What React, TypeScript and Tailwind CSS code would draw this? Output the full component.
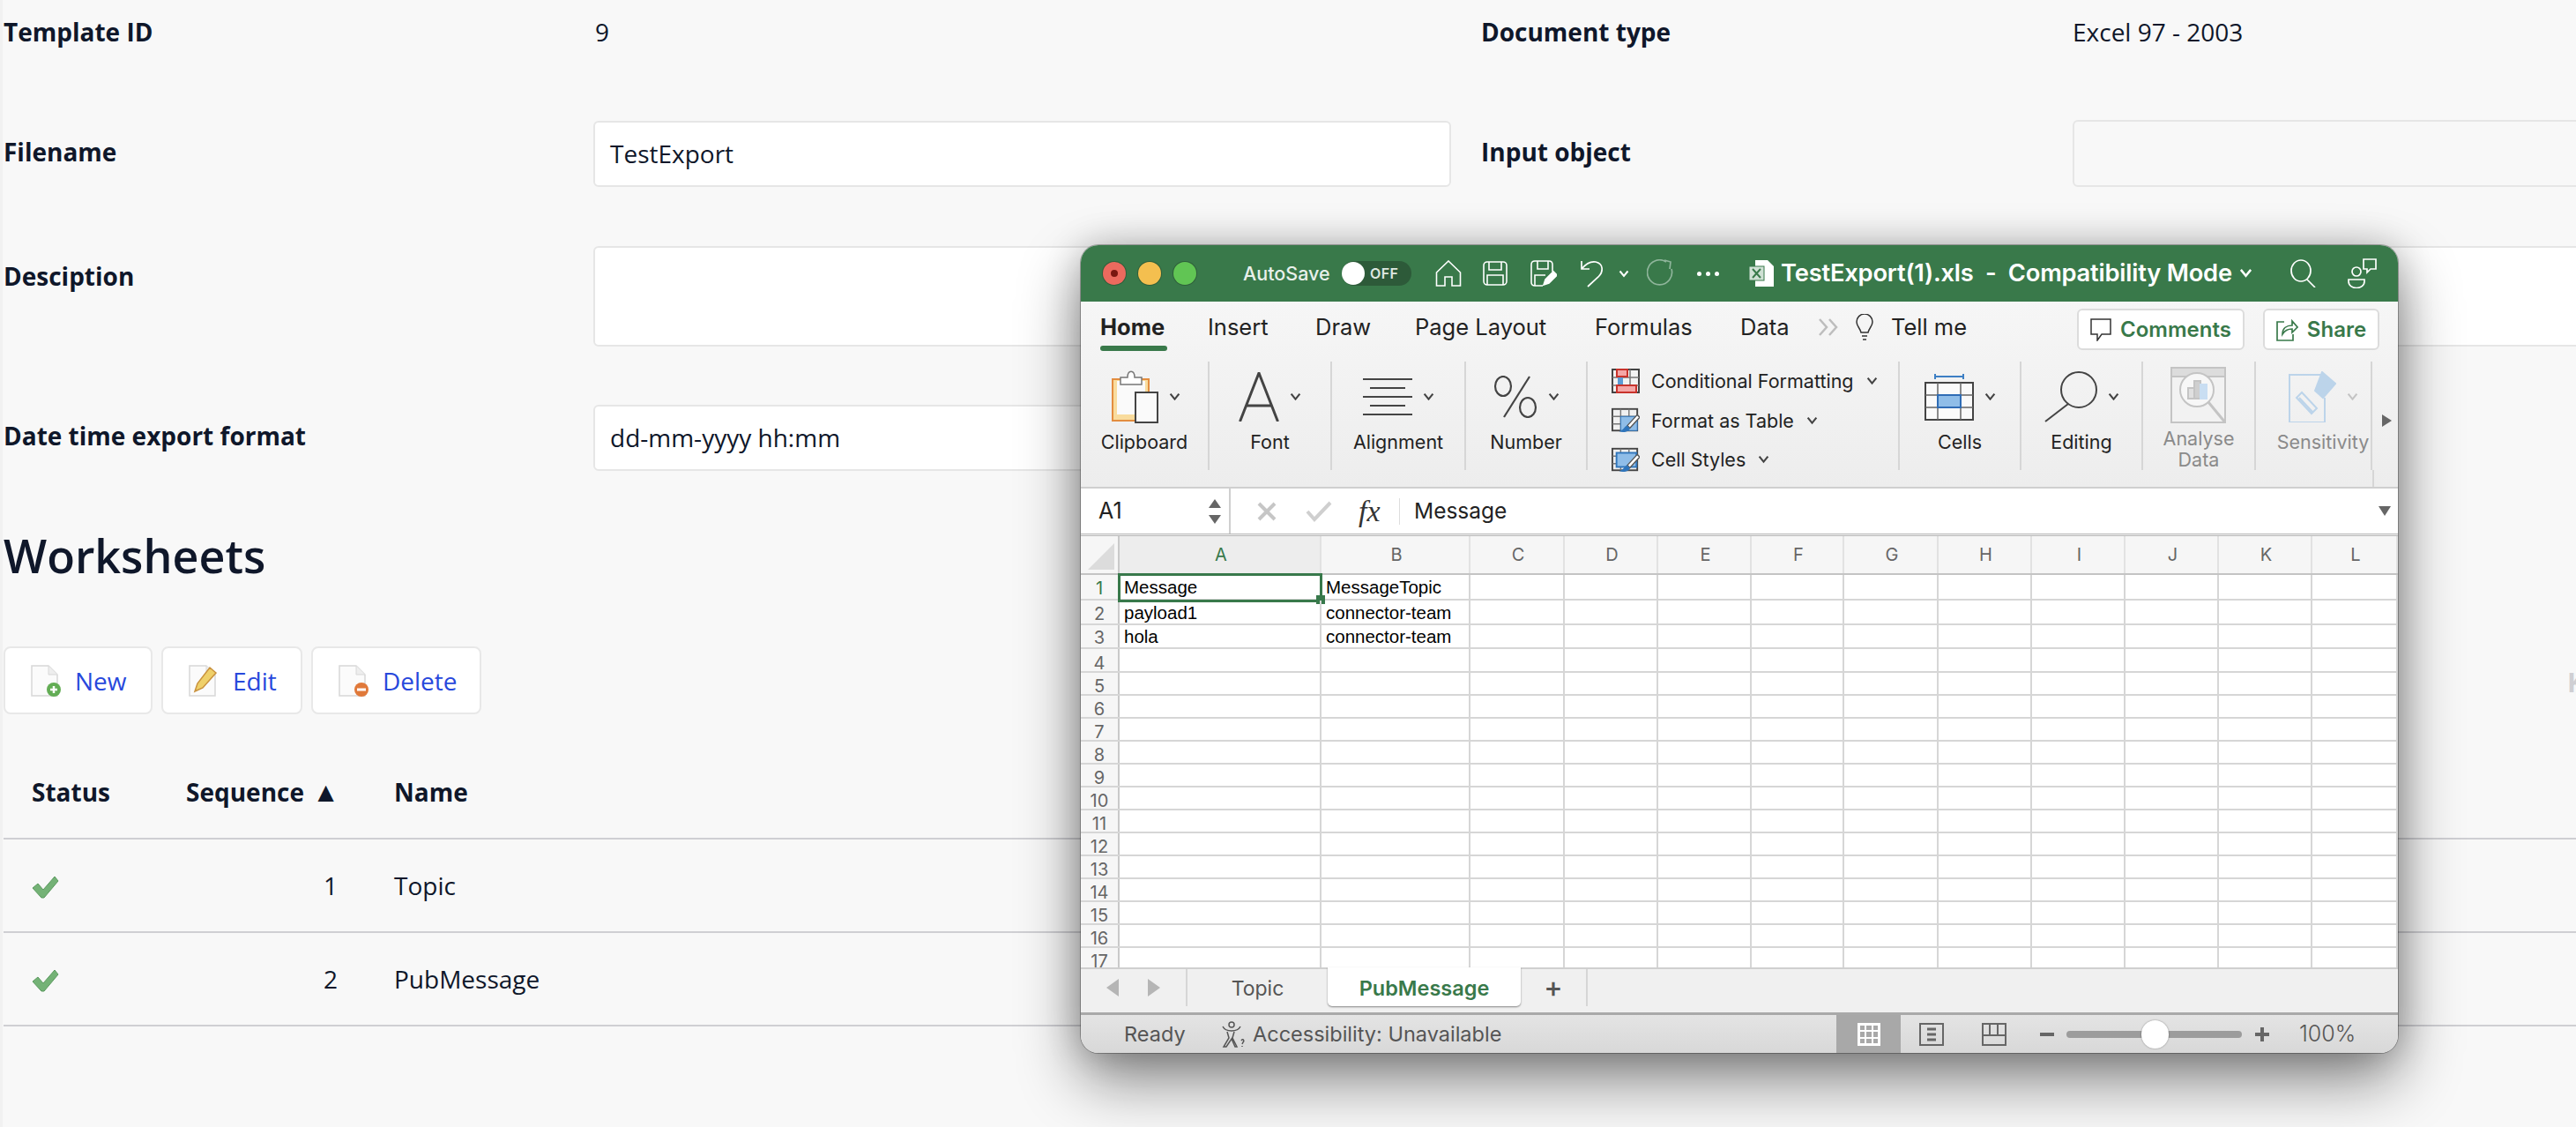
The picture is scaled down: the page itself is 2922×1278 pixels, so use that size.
import type { ReactNode } from 'react'

const PAGE_FONT = 'font-["Open_Sans","Noto_Sans",sans-serif]'

const COLUMNS = [
  { name: 'A', cls: 'w-[229px]' },
  { name: 'B', cls: 'w-[169px]' },
  { name: 'C', cls: 'w-[107px]' },
  { name: 'D', cls: 'w-[106px]' },
  { name: 'E', cls: 'w-[106px]' },
  { name: 'F', cls: 'w-[105px]' },
  { name: 'G', cls: 'w-[107px]' },
  { name: 'H', cls: 'w-[106px]' },
  { name: 'I', cls: 'w-[106px]' },
  { name: 'J', cls: 'w-[106px]' },
  { name: 'K', cls: 'w-[106px]' },
  { name: 'L', cls: 'w-[97px]' },
]

const ROW_HEIGHTS = ['h-[29px]', 'h-[28px]', 'h-[27px]', 'h-[27px]', 'h-[26px]']

const CELLS: Record<string, string> = {
  A1: 'Message',
  B1: 'MessageTopic',
  A2: 'payload1',
  B2: 'connector-team',
  A3: 'hola',
  B3: 'connector-team',
}

function Chev({ className = 'text-[#444]', w = 13 }: { className?: string; w?: number }) {
  return (
    <svg width={w} height={w * 0.75} viewBox="0 0 12 9" fill="none" className={`shrink-0 ${className}`}>
      <path d="M1.5 1.5 6 7l4.5-5.5" stroke="currentColor" strokeWidth="2" />
    </svg>
  )
}

function DocIcon({ children }: { children?: ReactNode }) {
  return (
    <svg width="34" height="36" viewBox="0 0 34 36" className="shrink-0">
      <path d="M1 1h19l10 10v24H1z" fill="#fbfbfb" stroke="#d8d8d8" strokeWidth="1.5" />
      <path d="M20 1v10h10" fill="#eee" stroke="#d8d8d8" strokeWidth="1" />
      {children}
    </svg>
  )
}

function CheckIcon() {
  return (
    <svg width="31" height="26" viewBox="0 0 31 26">
      <path d="M1 14 7 9l6 7L26 1l4 5-16 19h-3z" fill="#74b276" stroke="#5b9a5f" strokeWidth="1" />
    </svg>
  )
}

function Field({ label, children, className }: { label?: string; children?: ReactNode; className: string }) {
  return <div className={className}>{label ?? children}</div>
}

function ToolbarButton({ width, icon, label }: { width: string; icon: ReactNode; label: string }) {
  return (
    <div className={`flex h-[77px] items-center gap-[16px] rounded-[8px] border-2 border-[#e8e8e8] bg-white pl-[29px] ${width}`}>
      {icon}
      <span className="text-[28px] text-[#2748dc]">{label}</span>
    </div>
  )
}

function WorksheetRow({ seq, name }: { seq: number; name: string }) {
  return (
    <div className="grid h-[106px] grid-cols-[175px_236px_1fr] items-center border-b-2 border-[#cfcfd3] text-[28px] text-[#0f172a]">
      <div className="pl-[32px] pt-[4px]">
        <CheckIcon />
      </div>
      <div className="pr-[32px] text-right">{seq}</div>
      <div className="pl-[32px]">{name}</div>
    </div>
  )
}

function RibbonGroup({
  width,
  label,
  icon,
  chevron = true,
  muted = false,
  extra = '',
}: {
  width: string
  label: string
  icon: ReactNode
  chevron?: boolean
  muted?: boolean
  extra?: string
}) {
  return (
    <div className={`flex h-[123px] shrink-0 flex-col items-center border-r-2 border-[#d6d6d6] ${width} ${extra}`}>
      <div className="flex h-[79px] items-center justify-center gap-[12px]">
        {icon}
        {chevron && <Chev className={muted ? 'text-[#c4c4c4]' : 'text-[#444]'} />}
      </div>
      <div className={`text-center text-[21.5px] leading-[24px] ${muted ? 'text-[#8a8a8a]' : 'text-[#222]'}`}>{label}</div>
    </div>
  )
}

function StyleRow({ icon, label }: { icon: ReactNode; label: string }) {
  return (
    <div className="flex h-[44.5px] items-center">
      {icon}
      <span className="ml-[13px] whitespace-nowrap text-[21.5px] text-[#222]">{label}</span>
      <Chev className="ml-[14px] text-[#444]" />
    </div>
  )
}

function GridLines({ stroke = '#444' }: { stroke?: string }) {
  return (
    <g fill="none" stroke={stroke} strokeWidth="2">
      <rect x="1" y="1" width="30" height="26" />
      <path d="M1 10h30M1 19h30M11 1v26M21 1v26" stroke="#777" strokeWidth="1.5" />
    </g>
  )
}

function Brush() {
  return (
    <g>
      <path d="M31 8 19 21l3 3L34 11z" fill="#fff" stroke="#555" strokeWidth="1.5" />
      <path d="M19 21c-4 1-4 6-10 7 6 2 13 0 13-4z" fill="#2f75bb" />
    </g>
  )
}

function Sheet() {
  return (
    <div className="relative h-[489px] shrink-0 overflow-hidden bg-white font-['Inter',sans-serif]">
      <div className="flex h-[44px] border-b-2 border-[#c4c4c4] bg-[#f6f6f6] text-[20px] text-[#666]">
        <div className="flex w-[44px] shrink-0 items-end justify-end border-r-2 border-[#c9c9c9] p-[4px]">
          <svg width="30" height="30" viewBox="0 0 30 30">
            <path d="M30 0v30H0z" fill="#dcdcdc" />
          </svg>
        </div>
        {COLUMNS.map((c, i) => (
          <div
            key={c.name}
            className={`flex shrink-0 items-center justify-center border-r-2 border-[#e2e2e2] pl-[3px] ${c.cls} ${i === 0 ? 'bg-[#ededed] text-[#38794b]' : ''}`}
          >
            {c.name}
          </div>
        ))}
      </div>
      {Array.from({ length: 17 }, (_, r) => (
        <div key={r} className={`flex shrink-0 border-b-2 border-[#d6d6d6] ${ROW_HEIGHTS[r] ?? 'h-[26px]'}`}>
          <div
            className={`flex w-[44px] shrink-0 items-center justify-center border-r-2 border-[#c9c9c9] bg-[#f6f6f6] text-[20px] ${r < 3 ? 'pt-[3px]' : 'pt-[6px]'} ${r === 0 ? 'text-[#38794b]' : 'text-[#666]'}`}
          >
            {r + 1}
          </div>
          {COLUMNS.map((c) => {
            const id = `${c.name}${r + 1}`
            return (
              <div
                key={id}
                className={`relative flex shrink-0 items-center whitespace-nowrap border-r-2 border-[#d6d6d6] pl-[5px] pt-[2px] font-['Liberation_Sans',sans-serif] text-[20.5px] text-black ${c.cls}`}
              >
                {CELLS[id]}
                {id === 'A1' && (
                  <div className="absolute -left-[2px] -top-[2px] h-[33px] w-[232px] border-[3px] border-[#38794b]">
                    <div className="absolute -bottom-[5px] -right-[6px] h-[10px] w-[10px] bg-[#38794b]" />
                  </div>
                )}
              </div>
            )
          })}
        </div>
      ))}
    </div>
  )
}

function ExcelWindow() {
  return (
    <div className="absolute left-[1223px] top-[278px] flex h-[916px] w-[1494px] flex-col overflow-hidden rounded-[20px] font-['Inter',sans-serif] shadow-[0_30px_70px_rgba(0,0,0,0.48),0_0_40px_rgba(0,0,0,0.2),0_0_0_1px_rgba(0,0,0,0.28)]">
      {/* title bar */}
      <div className="flex h-[64px] shrink-0 items-center bg-[#39794a] pl-[25px] text-white">
        <div className="flex h-[26px] w-[26px] shrink-0 items-center justify-center rounded-full bg-[#ec6a5e] ring-1 ring-[#2f5f3b]">
          <div className="h-[8px] w-[8px] rounded-full bg-[#7a1710]" />
        </div>
        <div className="ml-[14px] h-[26px] w-[26px] shrink-0 rounded-full bg-[#f4bf4f] ring-1 ring-[#2f5f3b]" />
        <div className="ml-[14px] h-[26px] w-[26px] shrink-0 rounded-full bg-[#61c554] ring-1 ring-[#2f5f3b]" />
        <div className="ml-[53px] w-[100px] shrink-0 whitespace-nowrap text-[21.5px] font-medium text-[#e8f0ea]">AutoSave</div>
        <div className="ml-[12px] flex h-[28px] w-[79px] shrink-0 items-center rounded-full bg-[#2d5a39]">
          <div className="h-[26px] w-[26px] rounded-full bg-white" />
          <span className="ml-[6px] text-[16px] font-semibold tracking-wide text-[#dfe8e1]">OFF</span>
        </div>
        <svg width="30" height="30" viewBox="0 0 30 30" fill="none" stroke="#fff" strokeWidth="1.6" className="ml-[27px] shrink-0">
          <path d="M1.5 14 15 1l13.500 13v15H19V19h-8v10H1.500z" />
        </svg>
        <svg width="28" height="28" viewBox="0 0 28 28" fill="none" stroke="#fff" strokeWidth="1.6" className="ml-[24px] shrink-0">
          <rect x="1" y="1" width="26" height="26" rx="4" />
          <path d="M7 1v9h14V1M5 27V16h18v11" />
        </svg>
        <svg width="30" height="30" viewBox="0 0 30 30" fill="none" stroke="#fff" strokeWidth="1.6" className="ml-[26px] shrink-0">
          <path d="M14 29H5q-4 0-4-4V5q0-4 4-4h16q4 0 4 4v8" />
          <path d="M8 1v9h12V1M5 29V17h12" />
          <path d="M15 28l2-6 9-9 4 4-9 9z" fill="#fff" />
        </svg>
        <svg width="27" height="32" viewBox="0 0 27 32" fill="none" stroke="#fff" strokeWidth="1.7" className="ml-[26px] shrink-0">
          <path d="M2 2v9h9M2 11C7 5 12 2 18 3c9 2 9 11 3 17L9 31" />
        </svg>
        <Chev className="ml-[17px] text-white" w={12} />
        <svg width="31" height="32" viewBox="0 0 31 32" fill="none" stroke="#8fb59b" strokeWidth="1.7" className="ml-[20px] shrink-0">
          <path d="M22 3a14 14 0 1 0 6 8M20 1l7 2-1 8" />
        </svg>
        <div className="ml-[26px] flex w-[25px] shrink-0 justify-between">
          <div className="h-[5px] w-[5px] rounded-full bg-white" />
          <div className="h-[5px] w-[5px] rounded-full bg-white" />
          <div className="h-[5px] w-[5px] rounded-full bg-white" />
        </div>
        <svg width="30" height="32" viewBox="0 0 30 32" className="ml-[33px] shrink-0">
          <path d="M8 1h14l7 7v23H8z" fill="#fff" />
          <rect x="1" y="8" width="17" height="16" fill="#cfe0d4" stroke="#39794a" />
          <path d="M5 11l9 10M14 11 5 21" stroke="#39794a" strokeWidth="2" />
        </svg>
        <div className="ml-[7px] w-[512px] shrink-0 whitespace-pre text-[27.3px] font-semibold tracking-[-0.2px]">TestExport(1).xls  -  Compatibility Mode</div>
        <Chev className="ml-[8px] text-white" w={15} />
        <svg width="29" height="32" viewBox="0 0 29 32" fill="none" stroke="#fff" strokeWidth="1.7" className="ml-[43px] shrink-0">
          <ellipse cx="12" cy="13" rx="11" ry="12" />
          <path d="M19 23l9 9" />
        </svg>
        <svg width="33" height="34" viewBox="0 0 33 34" fill="none" stroke="#fff" strokeWidth="1.7" className="ml-[36px] shrink-0">
          <circle cx="10" cy="15" r="5" />
          <path d="M1 24h18v2c0 10-18 10-18 0z" />
          <path d="M18 1h14v11h-6l-4 4v-4h-4z" />
        </svg>
      </div>

      {/* ribbon */}
      <div className="h-[210px] shrink-0 bg-gradient-to-b from-[#f6f6f6] to-[#ededed]">
        <div className="flex h-[68px] items-start pl-[22px] pt-[8px] text-[25.5px] leading-[42px] text-[#222]">
          <div className="flex w-[76px] shrink-0 flex-col">
            <span className="font-bold">Home</span>
            <div className="h-[6px] rounded-full bg-[#39794a]" />
          </div>
          <span className="ml-[46px] w-[71px] shrink-0">Insert</span>
          <span className="ml-[51px] w-[64px] shrink-0">Draw</span>
          <span className="ml-[49px] w-[150px] shrink-0 whitespace-nowrap">Page Layout</span>
          <span className="ml-[54px] w-[112px] shrink-0">Formulas</span>
          <span className="ml-[53px] w-[57px] shrink-0">Data</span>
          <svg width="24" height="20" viewBox="0 0 24 20" fill="none" stroke="#bdbdbd" strokeWidth="2.5" className="ml-[31px] mt-[11px] shrink-0">
            <path d="M2 1l8 9-8 9M13 1l8 9-8 9" />
          </svg>
          <svg width="20" height="30" viewBox="0 0 20 30" fill="none" stroke="#333" strokeWidth="1.5" className="ml-[19px] mt-[6px] shrink-0">
            <path d="M6 21C5 16 1 14 1 9a9 9 0 0 1 18 0c0 5-4 7-5 12zM7 25h6M8 29h4" />
          </svg>
          <span className="ml-[20px] w-[86px] shrink-0 whitespace-nowrap">Tell me</span>
          <div className="ml-[125px] flex h-[47px] w-[190px] shrink-0 items-center justify-center gap-[10px] rounded-[6px] border-2 border-[#dcdcdc] bg-white text-[24px] font-semibold text-[#39794a]">
            <svg width="24" height="26" viewBox="0 0 24 26" fill="none" stroke="#333" strokeWidth="1.5" className="shrink-0">
              <path d="M1 1h22v17H13l-5 7v-7H1z" />
            </svg>
            Comments
          </div>
          <div className="ml-[21px] flex h-[47px] w-[132px] shrink-0 items-center justify-center gap-[10px] rounded-[6px] border-2 border-[#dcdcdc] bg-white text-[24px] font-semibold text-[#39794a]">
            <svg width="25" height="26" viewBox="0 0 25 26" fill="none" stroke="#39794a" strokeWidth="1.7" className="shrink-0">
              <path d="M9 4H1v21h18v-7M7 18c0-7 5-10 11-10V3l6 7-6 6v-4c-4 0-8 1-11 6z" />
            </svg>
            Share
          </div>
        </div>

        <div className="flex h-[123px] items-stretch">
          <RibbonGroup
            width="w-[146px]"
            extra="[&>div:first-child]:pl-[4px]"
            label="Clipboard"
            icon={
              <svg width="53" height="60" viewBox="0 0 53 60" className="shrink-0">
                <rect x="1" y="10" width="41" height="47" fill="#f9dc9d" stroke="#e38d3f" strokeWidth="2" />
                <rect x="6" y="12" width="32" height="38" fill="#fafafa" />
                <path d="M10 16V8h8c0-9 8-9 8 0h8v8z" fill="#fff" stroke="#777" strokeWidth="1.5" />
                <rect x="27" y="25" width="25" height="34" fill="#fafafa" stroke="#444" strokeWidth="2" />
              </svg>
            }
          />
          <RibbonGroup
            width="w-[139px]"
            label="Font"
            icon={
              <svg width="46" height="56" viewBox="0 0 46 56" fill="none" stroke="#444" strokeWidth="3" className="shrink-0">
                <path d="M1.500 56 23 1l21.500 55M9 38h28" />
              </svg>
            }
          />
          <RibbonGroup
            width="w-[152px]"
            label="Alignment"
            icon={
              <svg width="56" height="42" viewBox="0 0 56 42" stroke="#444" strokeWidth="2" className="shrink-0">
                <path d="M0 1h56M8 11h40M0 21h56M8 31h40M0 41h56" />
              </svg>
            }
          />
          <RibbonGroup
            width="w-[138px]"
            label="Number"
            icon={
              <svg width="50" height="48" viewBox="0 0 50 48" fill="none" stroke="#444" strokeWidth="2.2" className="shrink-0">
                <ellipse cx="11" cy="12" rx="9" ry="11" />
                <ellipse cx="39" cy="36" rx="9" ry="11" />
                <path d="M41 1 12 47" />
              </svg>
            }
          />
          <div className="h-[123px] w-[354px] shrink-0 border-r-2 border-[#d6d6d6] pl-[27px]">
            <StyleRow
              label="Conditional Formatting"
              icon={
                <svg width="32" height="28" viewBox="0 0 32 28" className="shrink-0">
                  <GridLines />
                  <rect x="6" y="1" width="12" height="8" fill="#f4a6a6" stroke="#c8332c" strokeWidth="2" />
                  <rect x="6" y="19" width="22" height="8" fill="#f4a6a6" stroke="#c8332c" strokeWidth="2" />
                  <rect x="7" y="10" width="6" height="8" fill="#5b9bd5" />
                </svg>
              }
            />
            <StyleRow
              label="Format as Table"
              icon={
                <svg width="32" height="29" viewBox="0 0 34 29" className="shrink-0">
                  <GridLines />
                  <rect x="11" y="10" width="20" height="17" fill="#8fbde8" stroke="#2f75bb" />
                  <Brush />
                </svg>
              }
            />
            <StyleRow
              label="Cell Styles"
              icon={
                <svg width="32" height="29" viewBox="0 0 34 29" className="shrink-0">
                  <GridLines />
                  <rect x="6" y="6" width="24" height="17" fill="#8fbde8" stroke="#2f75bb" strokeWidth="2" />
                  <Brush />
                </svg>
              }
            />
          </div>
          <RibbonGroup
            width="w-[138px]"
            label="Cells"
            icon={
              <svg width="56" height="54" viewBox="0 0 56 54" className="shrink-0">
                <path d="M12 4h32M12 1v6M44 1v6" stroke="#3d7fc4" strokeWidth="2" />
                <rect x="1" y="11" width="54" height="42" fill="#fafafa" stroke="#444" strokeWidth="2" />
                <path d="M15 11v42M41 11v42M1 25h54M1 39h54" stroke="#666" strokeWidth="1.500" />
                <rect x="15" y="25" width="26" height="14" fill="#8fbde8" stroke="#2f6cb5" strokeWidth="2" />
              </svg>
            }
          />
          <RibbonGroup
            width="w-[138px]"
            label="Editing"
            icon={
              <svg width="60" height="58" viewBox="0 0 60 58" fill="none" stroke="#444" strokeWidth="2" className="shrink-0">
                <ellipse cx="39" cy="21" rx="20" ry="20" />
                <path d="M27 37 1 57" />
              </svg>
            }
          />
          <RibbonGroup
            width="w-[128px]"
            label="Analyse Data"
            chevron={false}
            muted
            icon={
              <svg width="64" height="64" viewBox="0 0 64 64" fill="none" stroke="#c4c4c4" strokeWidth="2" className="shrink-0">
                <rect x="1" y="1" width="61" height="62" fill="#f2f2f2" />
                <rect x="1" y="1" width="61" height="10" fill="#dcdcdc" />
                <circle cx="30" cy="26" r="19" fill="#f7f7f7" />
                <path d="M43 40 62 63" strokeWidth="3" />
                <rect x="20" y="24" width="7" height="12" fill="#e0e0e0" />
                <rect x="27" y="16" width="7" height="20" fill="#cfcfcf" />
                <rect x="34" y="20" width="7" height="16" fill="#c9def2" stroke="#c9def2" />
              </svg>
            }
          />
          <RibbonGroup
            width="w-[132px]"
            extra="pl-[22px]"
            label="Sensitivity"
            muted
            icon={
              <svg width="54" height="58" viewBox="0 0 54 58" fill="none" stroke="#bcd4ea" strokeWidth="2" className="shrink-0">
                <path d="M40 4H1v54h40V30" />
                <path d="M26 48 9 30l6-6 17 18zM12 30l16 17" />
                <path d="M30 22 38 1l15 13-14 16z" fill="#bcd4ea" />
              </svg>
            }
          />
          <div className="flex w-[29px] shrink-0 items-center justify-center pl-[4px] pt-[10px]">
            <div className="h-0 w-0 border-y-[7px] border-l-[11px] border-y-transparent border-l-[#666]" />
          </div>
        </div>
        <div className="h-[19px] w-[1467px] border-r-2 border-[#d6d6d6]" />
      </div>

      {/* formula bar */}
      <div className="flex h-[53px] shrink-0 items-center border-t-2 border-[#cfcfcf] bg-white">
        <div className="flex h-full w-[170px] shrink-0 items-center justify-between border-r-2 border-[#cfcfcf] pl-[20px] pr-[9px] text-[25px] text-[#222]">
          A1
          <div className="flex flex-col gap-[8px]">
            <div className="h-0 w-0 border-x-[7px] border-b-[10px] border-x-transparent border-b-[#666]" />
            <div className="h-0 w-0 border-x-[7px] border-t-[10px] border-x-transparent border-t-[#666]" />
          </div>
        </div>
        <svg width="22" height="22" viewBox="0 0 22 22" stroke="#c6c6c6" strokeWidth="4" className="ml-[30px] shrink-0">
          <path d="M2 2l18 18M20 2 2 20" />
        </svg>
        <svg width="30" height="24" viewBox="0 0 30 24" fill="none" stroke="#cfcfcf" strokeWidth="4" className="ml-[33px] shrink-0">
          <path d="M2 12l8 9L28 2" />
        </svg>
        <span className="ml-[30px] w-[28px] shrink-0 font-['Liberation_Serif',serif] text-[34px] italic leading-none text-[#333]">fx</span>
        <div className="ml-[18px] h-[30px] w-px shrink-0 bg-[#ddd]" />
        <span className="ml-[16px] text-[24.5px] text-[#222]">Message</span>
        <div className="ml-auto mr-[8px] h-0 w-0 border-x-[7px] border-t-[11px] border-x-transparent border-t-[#666]" />
      </div>
      <div className="h-[3px] shrink-0 border-y border-[#b8b8b8] bg-[#f0f0f0]" />

      <Sheet />

      {/* sheet tabs */}
      <div className="flex h-[51px] shrink-0 items-start border-t-2 border-[#cfcfcf] bg-[#f0f0f0]">
        <div className="flex h-[42px] w-[121px] shrink-0 items-center border-r-2 border-[#d6d6d6] pl-[29px]">
          <div className="h-0 w-0 border-y-[10px] border-r-[14px] border-y-transparent border-r-[#b5b5b5]" />
          <div className="ml-[33px] h-0 w-0 border-y-[10px] border-l-[14px] border-y-transparent border-l-[#b5b5b5]" />
        </div>
        <div className="flex h-[42px] w-[159px] shrink-0 items-center justify-center pt-[2px] text-[23px] text-[#555]">Topic</div>
        <div className="flex h-[44px] w-[219px] -translate-y-[2px] shrink-0 items-center justify-center rounded-b-[5px] bg-white pt-[3px] text-[23.5px] font-semibold text-[#39794a] shadow-[0_1px_2px_rgba(0,0,0,0.45)]">
          PubMessage
        </div>
        <div className="flex h-[42px] w-[76px] shrink-0 items-center justify-center border-r-2 border-[#d6d6d6] text-[32px] font-medium text-[#555]">+</div>
      </div>

      {/* status bar */}
      <div className="flex h-[46px] shrink-0 items-center border-t-[3px] border-[#a9a9a9] bg-gradient-to-b from-[#e4e4e4] to-[#d8d8d8] pl-[49px] text-[23.5px] text-[#555]">
        <span className="w-[68px] shrink-0">Ready</span>
        <svg width="28" height="30" viewBox="0 0 28 30" fill="none" stroke="#555" strokeWidth="1.500" className="ml-[42px] shrink-0">
          <circle cx="12" cy="4" r="3" />
          <path d="M2 6c2 4 5 5 10 5s8-1 10-5M7 12l2 7-6 10h3l6-9 4 9h2l-5-10 2-7" />
          <path d="M23 22c2-3 4 0 2 2l-1 2M24 28v1" />
        </svg>
        <span className="ml-[8px] w-[283px] shrink-0 whitespace-nowrap">Accessibility: Unavailable</span>
        <div className="ml-[379px] flex h-full w-[73px] shrink-0 items-center justify-center bg-[#a8a8a8]">
          <svg width="26" height="26" viewBox="0 0 26 26" fill="#fff" fillRule="evenodd">
            <path d="M0 0h26v26H0zM3 3v5h5V3zM10 3v5h6V3zM18 3v5h5V3zM3 10v6h5v-6zM10 10v6h6v-6zM18 10v6h5v-6zM3 18v5h5v-5zM10 18v5h6v-5zM18 18v5h5v-5z" />
          </svg>
        </div>
        <svg width="28" height="26" viewBox="0 0 28 26" fill="none" stroke="#666" strokeWidth="2" className="ml-[21px] shrink-0">
          <rect x="1" y="1" width="26" height="24" />
          <path d="M9 7h10M9 13h10M9 19h10" strokeWidth="3" />
        </svg>
        <svg width="28" height="26" viewBox="0 0 28 26" fill="none" stroke="#666" strokeWidth="2" className="ml-[43px] shrink-0">
          <rect x="1" y="1" width="26" height="24" />
          <path d="M9 1v13h9V1M1 14h26" />
        </svg>
        <div className="ml-[38px] h-[4px] w-[16px] shrink-0 bg-[#666]" />
        <div className="ml-[14px] flex h-[8px] w-[199px] shrink-0 items-center rounded-full bg-[#9c9c9c] pl-[85px]">
          <div className="h-[32px] w-[31px] rounded-full bg-white shadow-[0_0_2px_rgba(0,0,0,0.4)]" />
        </div>
        <div className="ml-[15px] flex h-[16px] w-[16px] shrink-0 items-center justify-center bg-[linear-gradient(#666,#666),linear-gradient(#666,#666)] bg-[length:100%_4px,4px_100%] bg-center bg-no-repeat" />
        <span className="ml-[34px] whitespace-nowrap text-[25px] font-light">100%</span>
      </div>
    </div>
  )
}

export default function App() {
  return (
    <div className={`relative h-[1278px] w-[2922px] overflow-hidden border-l-[3px] border-[#f1f1f1] bg-[#f8f8f8] pl-[1px] text-[#0f172a] ${PAGE_FONT}`}>
      <div className="grid h-[72px] grid-cols-[669px_1007px_671px_1fr] items-center text-[28px]">
        <Field className="font-bold" label="Template ID" />
        <Field className="pl-[2px]" label="9" />
        <Field className="font-bold" label="Document type" />
        <Field label="Excel 97 - 2003" />
      </div>

      <div className="mt-[64px] grid h-[75px] grid-cols-[669px_1007px_671px_1fr] items-center text-[28px]">
        <Field className="pb-[4px] font-bold" label="Filename" />
        <Field className="flex h-[75px] w-[973px] items-center rounded-[6px] border-2 border-[#e6e6e6] bg-white pl-[17px]" label="TestExport" />
        <Field className="pb-[4px] font-bold" label="Input object" />
        <Field className="-mr-[20px] h-[76px] rounded-[6px] border-2 border-[#e6e6e6] bg-[#f8f8f8]" />
      </div>

      <div className="mt-[68px] grid h-[114px] grid-cols-[669px_1007px_671px_1fr] text-[28px]">
        <Field className="pt-[13px] font-bold" label="Desciption" />
        <Field className="h-[114px] w-[973px] rounded-[6px] border-2 border-[#e6e6e6] bg-white" />
        <div />
        <Field className="-mr-[20px] h-[114px] rounded-[6px] border-2 border-[#e6e6e6] bg-white" />
      </div>

      <div className="mt-[66px] grid h-[75px] grid-cols-[669px_1007px_671px_1fr] items-center text-[28px]">
        <Field className="pb-[6px] font-bold" label="Date time export format" />
        <Field className="flex h-[75px] w-[973px] items-center rounded-[6px] border-2 border-[#e6e6e6] bg-white pb-[1px] pl-[17px]" label="dd-mm-yyyy hh:mm" />
      </div>

      <h2 className="mt-[61px] flex h-[70px] items-center text-[52px] font-semibold">Worksheets</h2>

      <div className="mt-[68px] flex gap-[10px]">
        <ToolbarButton
          width="w-[169px]"
          label="New"
          icon={
            <DocIcon>
              <circle cx="26" cy="28" r="8" fill="#63ad55" />
              <path d="M26 24v8M22 28h8" stroke="#fff" strokeWidth="2.5" />
            </DocIcon>
          }
        />
        <ToolbarButton
          width="w-[160px]"
          label="Edit"
          icon={
            <DocIcon>
              <path d="M7 30l3-9L24 3l7 6-15 17z" fill="#efd06a" stroke="#c9923e" strokeWidth="1.500" />
            </DocIcon>
          }
        />
        <ToolbarButton
          width="w-[193px]"
          label="Delete"
          icon={
            <DocIcon>
              <circle cx="26" cy="28" r="8" fill="#e0793a" />
              <path d="M21 28h10" stroke="#fff" strokeWidth="3" />
            </DocIcon>
          }
        />
      </div>

      <div className="mt-[36px] grid h-[106px] grid-cols-[175px_236px_1fr] items-center border-b-2 border-[#cfcfd3] text-[28px] font-bold">
        <div className="pl-[32px]">Status</div>
        <div className="whitespace-nowrap pl-[32px]">
          Sequence <span className="ml-[2px] text-[31px] leading-none">▲</span>
        </div>
        <div className="pl-[32px]">Name</div>
      </div>
      <WorksheetRow seq={1} name="Topic" />
      <WorksheetRow seq={2} name="PubMessage" />

      <span className="absolute left-[2909px] top-[751px] text-[30px] font-bold text-[#cfcfd3]">K</span>

      <ExcelWindow />
    </div>
  )
}
